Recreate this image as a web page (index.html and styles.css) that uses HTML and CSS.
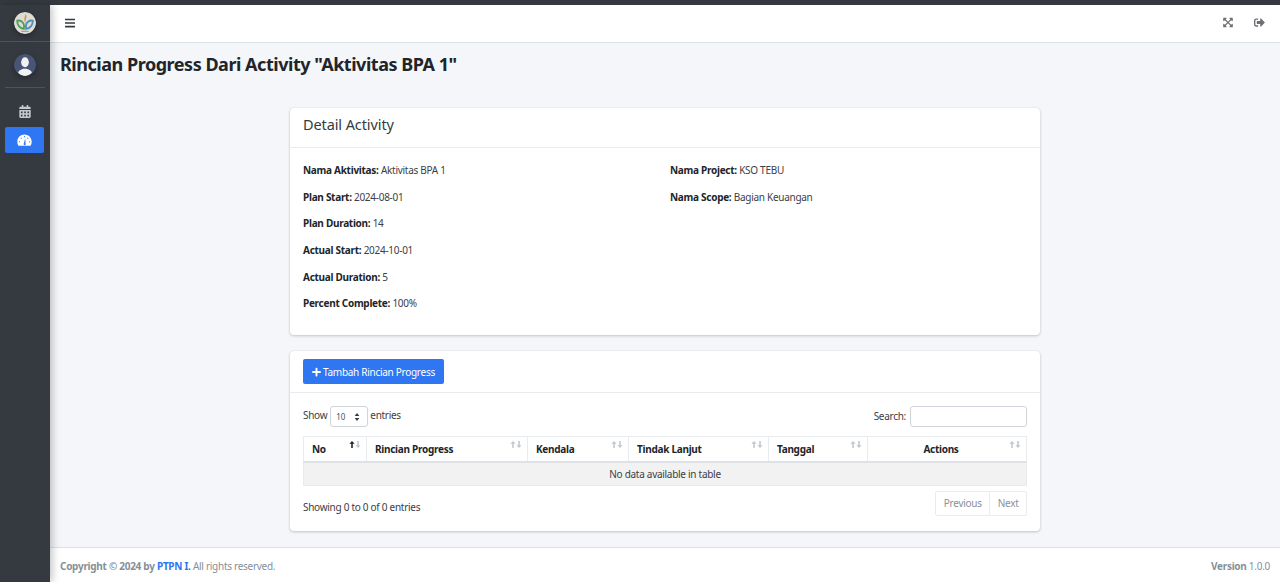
FILE: index.html
```html
<!DOCTYPE html>
<html lang="id">
<head>
    <meta charset="UTF-8">
    <meta name="viewport" content="width=device-width, initial-scale=1.0">
    <title>Rincian Progress</title>
    <link rel="stylesheet" href="styles.css">
</head>
<body>
    <svg class="defs" width="0" height="0">
        <symbol id="sort-up" viewBox="0 0 6 8"><path fill="currentColor" d="M3 0l3 3.200H3.900V8H2.100V3.200H0z"/></symbol>
        <symbol id="sort-down" viewBox="0 0 6 8"><path fill="currentColor" d="M3 8L0 4.800h2.100V0h1.800v4.800H6z"/></symbol>
    </svg>
    <div class="wrapper">
        <aside class="sidebar">
            <div class="brand">
                <svg class="brand-logo" viewBox="0 0 24 24" width="22" height="22">
                    <circle cx="12" cy="12" r="12" fill="#dedcd3"/>
                    <path d="M12.500 2c1.500 2 1.200 4 .3 6-.2 2-.2 3-.2 4-1-2-1.600-3-1.200-5 .3-2 1.300-3 1.100-5z" fill="#c9964a"/>
                    <path d="M3.500 9.500c3.500-.8 7 1 7.500 5.500l-.3 3.500c-4-.3-7.200-4-7.200-9z" fill="none" stroke="#4f9d5b" stroke-width="2"/>
                    <path d="M20.500 9.500c-3.500-.8-7 1-7.500 5.500l.3 3.500c4-.3 7.200-4 7.200-9z" fill="none" stroke="#4a8fbf" stroke-width="2"/>
                    <rect x="8" y="20.500" width="8" height="1.200" fill="#9a9a94"/>
                </svg>
            </div>
            <div class="user-panel">
                <svg class="avatar" viewBox="0 0 24 24" width="22" height="22">
                    <circle cx="12" cy="12" r="12" fill="#4a5474"/>
                    <ellipse cx="12" cy="9" rx="4.200" ry="5.500" fill="#f1f2f4"/>
                    <path d="M4.500 20.500c.5-3 3-3.500 5.500-4.500l4 0c2.500 1 5 1.500 5.500 4.500-2 2.200-4.500 3.500-7.500 3.500s-5.500-1.300-7.500-3.500z" fill="#f1f2f4"/>
                </svg>
            </div>
            <nav class="side-nav">
                <a class="nav-item" href="#">
                    <svg viewBox="0 0 448 512" width="12" height="13"><path fill="currentColor" d="M0 464c0 26.500 21.500 48 48 48h352c26.500 0 48-21.500 48-48V192H0v272zm320-196c0-6.600 5.400-12 12-12h40c6.600 0 12 5.400 12 12v40c0 6.600-5.400 12-12 12h-40c-6.600 0-12-5.400-12-12v-40zm0 128c0-6.600 5.400-12 12-12h40c6.600 0 12 5.400 12 12v40c0 6.600-5.400 12-12 12h-40c-6.600 0-12-5.400-12-12v-40zM192 268c0-6.600 5.400-12 12-12h40c6.600 0 12 5.400 12 12v40c0 6.600-5.400 12-12 12h-40c-6.600 0-12-5.400-12-12v-40zm0 128c0-6.600 5.400-12 12-12h40c6.600 0 12 5.400 12 12v40c0 6.600-5.400 12-12 12h-40c-6.600 0-12-5.400-12-12v-40zM64 268c0-6.600 5.400-12 12-12h40c6.600 0 12 5.400 12 12v40c0 6.600-5.400 12-12 12H76c-6.600 0-12-5.400-12-12v-40zm0 128c0-6.600 5.400-12 12-12h40c6.600 0 12 5.400 12 12v40c0 6.600-5.400 12-12 12H76c-6.600 0-12-5.400-12-12v-40zM400 64h-48V16c0-8.800-7.200-16-16-16h-32c-8.800 0-16 7.200-16 16v48H160V16c0-8.800-7.200-16-16-16h-32c-8.800 0-16 7.200-16 16v48H48C21.500 64 0 85.500 0 112v48h448v-48c0-26.500-21.500-48-48-48z"/></svg>
                </a>
                <a class="nav-item active" href="#">
                    <svg viewBox="0 0 24 20" width="15" height="12"><path fill="currentColor" d="M12 1C5.400 1 0 6.300 0 13c0 2.200.6 4.300 1.700 6 .2.400.6.600 1 .6h18.600c.4 0 .8-.2 1-.6 1.100-1.700 1.700-3.800 1.700-6 0-6.700-5.400-12-12-12z"/><circle cx="12" cy="4.500" r="1" fill="#2f76f2"/><circle cx="6.500" cy="7" r="1" fill="#2f76f2"/><circle cx="17.500" cy="7" r="1" fill="#2f76f2"/><circle cx="3.500" cy="13" r="1" fill="#2f76f2"/><circle cx="20.500" cy="13" r="1" fill="#2f76f2"/><path d="M11 15.500l2.200-8.500.6 8.800a1.800 1.800 0 1 1-2.800-.3z" fill="#2f76f2"/></svg>
                </a>
            </nav>
        </aside>

        <div class="main">
            <header class="navbar">
                <a class="nav-icon dark" href="#">
                    <svg viewBox="0 0 448 512" width="10" height="12"><path fill="currentColor" d="M16 132h416c8.800 0 16-7.200 16-16V76c0-8.800-7.200-16-16-16H16C7.200 60 0 67.200 0 76v40c0 8.800 7.200 16 16 16zm0 160h416c8.800 0 16-7.200 16-16v-40c0-8.800-7.200-16-16-16H16c-8.800 0-16 7.200-16 16v40c0 8.800 7.200 16 16 16zm0 160h416c8.800 0 16-7.200 16-16v-40c0-8.800-7.200-16-16-16H16c-8.800 0-16 7.200-16 16v40c0 8.800 7.200 16 16 16z"/></svg>
                </a>
                <div class="nav-right">
                    <a class="nav-icon" href="#">
                        <svg viewBox="0 0 448 512" width="10" height="11"><path fill="currentColor" d="M448 344v112a23.900 23.900 0 0 1-24 24H312c-21.400 0-32.100-25.900-17-41l36.200-36.200L224 295.600 116.800 402.900 153 439c15.100 15.100 4.400 41-17 41H24a23.900 23.900 0 0 1-24-24V344c0-21.400 25.900-32.100 41-17l36.200 36.200L184.500 256 77.200 148.700 41 185c-15.100 15.100-41 4.400-41-17V56a23.900 23.900 0 0 1 24-24h112c21.400 0 32.100 25.900 17 41l-36.200 36.200L224 216.400l107.300-107.300L295 73c-15.100-15.100-4.400-41 17-41h112a23.900 23.900 0 0 1 24 24v112c0 21.400-25.900 32.100-41 17l-36.200-36.200L263.500 256l107.300 107.300L407 327.100c15.100-15.200 41-4.500 41 16.900z"/></svg>
                    </a>
                    <a class="nav-icon" href="#">
                        <svg viewBox="0 0 512 512" width="11" height="11"><path fill="currentColor" d="M497 273L329 441c-15 15-41 4.500-41-17v-96H152c-13.300 0-24-10.700-24-24v-96c0-13.300 10.700-24 24-24h136V88c0-21.400 25.900-32 41-17l168 168c9.300 9.400 9.300 24.600 0 34zM192 436v-40c0-6.600-5.400-12-12-12H96c-17.700 0-32-14.300-32-32V160c0-17.700 14.300-32 32-32h84c6.600 0 12-5.400 12-12V76c0-6.600-5.400-12-12-12H96c-53 0-96 43-96 96v192c0 53 43 96 96 96h84c6.600 0 12-5.400 12-12z"/></svg>
                    </a>
                </div>
            </header>

            <main class="content">
                <h1 class="page-title">Rincian Progress Dari Activity "Aktivitas BPA 1"</h1>

                <section class="card">
                    <div class="card-header title-header">
                        <h3 class="card-title">Detail Activity</h3>
                    </div>
                    <div class="card-body detail-body">
                        <div class="detail-col">
                            <p><b>Nama Aktivitas:</b> Aktivitas BPA 1</p>
                            <p><b>Plan Start:</b> 2024-08-01</p>
                            <p><b>Plan Duration:</b> 14</p>
                            <p><b>Actual Start:</b> 2024-10-01</p>
                            <p><b>Actual Duration:</b> 5</p>
                            <p><b>Percent Complete:</b> 100%</p>
                        </div>
                        <div class="detail-col">
                            <p><b>Nama Project:</b> KSO TEBU</p>
                            <p><b>Nama Scope:</b> Bagian Keuangan</p>
                        </div>
                    </div>
                </section>

                <section class="card">
                    <div class="card-header btn-header">
                        <a class="btn-primary" href="#">
                            <svg viewBox="0 0 448 512" width="9" height="10"><path fill="currentColor" d="M416 208H272V64c0-17.700-14.300-32-32-32h-32c-17.700 0-32 14.300-32 32v144H32c-17.700 0-32 14.300-32 32v32c0 17.700 14.300 32 32 32h144v144c0 17.700 14.300 32 32 32h32c17.700 0 32-14.300 32-32V304h144c17.700 0 32-14.300 32-32v-32c0-17.700-14.300-32-32-32z"/></svg>
                            Tambah Rincian Progress
                        </a>
                    </div>
                    <div class="card-body table-body">
                        <div class="table-top">
                            <label class="length">
                                Show
                                <span class="select-wrap">
                                    <select class="length-select">
                                        <option>10</option>
                                        <option>25</option>
                                    </select>
                                    <svg class="select-arrow" viewBox="0 0 8 12" width="6" height="8"><path fill="currentColor" d="M4 0l3.500 4.500h-7zM4 12L.5 7.500h7z"/></svg>
                                </span>
                                entries
                            </label>
                            <label class="search">
                                Search:
                                <input type="search" class="search-input">
                            </label>
                        </div>

                        <table class="data-table">
                            <thead>
                                <tr>
                                    <th class="col-no">No<span class="sort"><svg class="on"><use href="#sort-up"/></svg><svg><use href="#sort-down"/></svg></span></th>
                                    <th class="col-rincian">Rincian Progress<span class="sort"><svg><use href="#sort-up"/></svg><svg><use href="#sort-down"/></svg></span></th>
                                    <th class="col-kendala">Kendala<span class="sort"><svg><use href="#sort-up"/></svg><svg><use href="#sort-down"/></svg></span></th>
                                    <th class="col-tindak">Tindak Lanjut<span class="sort"><svg><use href="#sort-up"/></svg><svg><use href="#sort-down"/></svg></span></th>
                                    <th class="col-tanggal">Tanggal<span class="sort"><svg><use href="#sort-up"/></svg><svg><use href="#sort-down"/></svg></span></th>
                                    <th class="col-actions">Actions<span class="sort"><svg><use href="#sort-up"/></svg><svg><use href="#sort-down"/></svg></span></th>
                                </tr>
                            </thead>
                            <tbody>
                                <tr>
                                    <td colspan="6">No data available in table</td>
                                </tr>
                            </tbody>
                        </table>

                        <div class="table-bottom">
                            <div class="info">Showing 0 to 0 of 0 entries</div>
                            <div class="pagination">
                                <a href="#">Previous</a>
                                <a href="#">Next</a>
                            </div>
                        </div>
                    </div>
                </section>
            </main>

            <footer class="footer">
                <div><b>Copyright © 2024 by <a href="#">PTPN I.</a></b> All rights reserved.</div>
                <div><b>Version</b> 1.0.0</div>
            </footer>
        </div>
    </div>
</body>
</html>
```

FILE: styles.css
```css
* {
    margin: 0;
    padding: 0;
    box-sizing: border-box;
}

body {
    font-family: "Noto Sans", "Open Sans", sans-serif;
    font-size: 10px;
    letter-spacing: -0.28px;
    color: #212529;
    background: #f4f6f9;
    height: 582px;
    overflow: hidden;
}

a {
    text-decoration: none;
}

.defs {
    display: block;
    height: 0;
}

.wrapper {
    display: flex;
    height: 582px;
    border-top: 5px solid #343a40;
}

.sidebar {
    width: 50px;
    flex-shrink: 0;
    background: #343a40;
    box-shadow: 2px 0 8px rgba(0,0,0,0.25);
    z-index: 2;
}

.brand {
    height: 37px;
    display: flex;
    align-items: center;
    justify-content: center;
    padding-right: 1px;
    border-bottom: 1px solid #4b545c;
}

.user-panel {
    height: 46px;
    margin: 0 5px;
    display: flex;
    align-items: center;
    justify-content: center;
    padding-right: 1px;
    border-bottom: 1px solid #4b545c;
}

.brand-logo,
.avatar {
    border-radius: 50%;
    box-shadow: 0 2px 5px rgba(0,0,0,0.3);
}

.side-nav {
    padding: 10px 5px 0;
}

.nav-item {
    display: flex;
    align-items: center;
    justify-content: center;
    width: 39px;
    height: 26px;
    margin-bottom: 3px;
    border-radius: 2px;
    color: #c2c7d0;
}

.nav-item.active {
    background: #2f76f2;
    color: #fff;
}

.main {
    flex: 1;
    display: flex;
    flex-direction: column;
    min-width: 0;
}

.navbar {
    height: 38px;
    flex-shrink: 0;
    background: #fff;
    border-bottom: 1px solid #dee2e6;
    display: flex;
    align-items: center;
    justify-content: space-between;
    padding: 0 15px 2px;
}

.nav-right {
    display: flex;
    gap: 21px;
}

.nav-icon {
    display: flex;
    color: #6c6f73;
}

.nav-icon.dark {
    color: #343a40;
}

.content {
    flex: 1;
    padding: 0 10px;
}

.page-title {
    font-size: 18px;
    font-weight: 700;
    letter-spacing: -0.47px;
    line-height: 24px;
    margin-top: 9px;
    margin-bottom: 32px;
    color: #212529;
}

.card {
    width: 750px;
    margin: 0 auto 16px;
    background: #fff;
    border-radius: 4px;
    box-shadow: 0 0 1px rgba(0,0,0,0.13), 0 1px 3px rgba(0,0,0,0.2);
}

.card-header {
    height: 40px;
    padding: 0 13px;
    display: flex;
    align-items: center;
    border-bottom: 1px solid #e9ecef;
}

.title-header {
    padding-bottom: 8px;
}

.card-title {
    font-size: 14.500px;
    font-weight: 400;
    letter-spacing: -0.1px;
    color: #343a40;
}

.btn-header {
    height: 42px;
}

.btn-primary {
    display: inline-flex;
    align-items: center;
    gap: 2px;
    height: 25px;
    padding: 0 9px 0 9px;
    background: #2f76f2;
    border-radius: 2px;
    color: #fff;
    font-size: 10px;
}

.detail-body {
    display: flex;
    height: 187px;
    padding: 9px 13px 0;
}

.detail-col {
    width: 367px;
    flex-shrink: 0;
}

.detail-col p {
    height: 26.700px;
    line-height: 26.700px;
    font-size: 10px;
    color: #3b4046;
}

.detail-col b {
    color: #212529;
}

.table-body {
    padding: 13px 13px 0;
    height: 138px;
}

.table-top {
    display: flex;
    justify-content: space-between;
    height: 30px;
}

.length {
    display: flex;
    align-items: flex-start;
    gap: 2px;
    line-height: 19px;
    font-size: 10px;
    color: #3b4046;
}

.select-wrap {
    position: relative;
    display: block;
    margin-left: 1px;
}

.length-select {
    appearance: none;
    display: block;
    width: 38px;
    height: 21px;
    padding-left: 5px;
    border: 1px solid #ced4da;
    border-radius: 3px;
    background: #fff;
    color: #495057;
    font-family: inherit;
    font-size: 8px;
}

.select-arrow {
    position: absolute;
    right: 8px;
    top: 7px;
    color: #343a40;
}

.search {
    display: flex;
    align-items: flex-start;
    gap: 4px;
    line-height: 21px;
    font-size: 10px;
    color: #3b4046;
}

.search-input {
    display: block;
    width: 117px;
    height: 21px;
    border: 1px solid #ced4da;
    border-radius: 3px;
    background: #fff;
}

.data-table {
    width: 724px;
    table-layout: fixed;
    border-collapse: collapse;
    border: 1px solid #e9ecef;
}

.data-table th {
    position: relative;
    height: 25px;
    padding: 0 8px;
    text-align: left;
    font-size: 10px;
    font-weight: 700;
    color: #212529;
    border-right: 1px solid #e9ecef;
    border-bottom: 2px solid #dee2e6;
    vertical-align: middle;
}

.data-table th:last-child {
    border-right: none;
}

.col-no { width: 63px; }
.col-rincian { width: 161px; }
.col-kendala { width: 101px; }
.col-tindak { width: 140px; }
.col-tanggal { width: 99px; }

.data-table th.col-actions {
    text-align: center;
    padding-right: 20px;
}

.sort {
    position: absolute;
    top: 4px;
    right: 5px;
    display: flex;
    color: #c4c8cc;
}

.sort svg {
    display: block;
    width: 6px;
    height: 7px;
}

.sort .on {
    color: #212529;
}

.data-table td {
    height: 24px;
    text-align: center;
    font-size: 10px;
    background: #f2f2f2;
    color: #3b4046;
}

.table-bottom {
    display: flex;
    justify-content: space-between;
    padding-top: 5px;
}

.info {
    padding-top: 9px;
    line-height: 15px;
    font-size: 10px;
    color: #3b4046;
}

.pagination {
    display: flex;
}

.pagination a {
    height: 25px;
    line-height: 23px;
    padding: 0 7.500px;
    border: 1px solid #e9ecef;
    color: #8a9097;
    font-size: 10px;
    background: #fff;
}

.pagination a:first-child {
    border-radius: 2px 0 0 2px;
}

.pagination a:last-child {
    border-left: none;
    border-radius: 0 2px 2px 0;
}

.footer {
    height: 36px;
    flex-shrink: 0;
    background: #fff;
    border-top: 1px solid #dee2e6;
    display: flex;
    align-items: center;
    justify-content: space-between;
    padding: 0 10px;
    font-size: 10px;
    color: #869099;
}

.footer a {
    color: #2f76f2;
}
```
